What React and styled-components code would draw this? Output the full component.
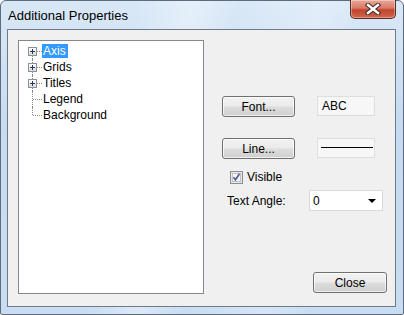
import React from 'react';
import styled, { createGlobalStyle } from 'styled-components';

const GlobalStyle = createGlobalStyle`
  html, body { margin: 0; padding: 0; background: #ffffff; }
  body { font-family: "Liberation Sans", Arial, sans-serif; }
`;

const treeItems = [
  { label: 'Axis', expandable: true, selected: true },
  { label: 'Grids', expandable: true },
  { label: 'Titles', expandable: true },
  { label: 'Legend' },
  { label: 'Background' },
];

const PlusBox = () => (
  <svg width="9" height="9" viewBox="0 0 9 9">
    <defs>
      <linearGradient id="pb" x1="0" y1="0" x2="0" y2="1">
        <stop offset="0" stopColor="#ffffff" />
        <stop offset="1" stopColor="#d8d8d8" />
      </linearGradient>
    </defs>
    <rect x="0.5" y="0.5" width="8" height="8" fill="url(#pb)" stroke="#8f8f8f" />
    <path d="M2 4.5h5M4.5 2v5" stroke="#1e3b78" strokeWidth="1" />
  </svg>
);

const CheckMark = () => (
  <svg width="13" height="13" viewBox="0 0 13 13">
    <rect x="0.5" y="0.5" width="12" height="12" fill="#e6e6e6" stroke="#8e8f8f" />
    <rect x="2.5" y="2.5" width="8" height="8" fill="#f4f4f4" stroke="#c4c4c4" />
    <path d="M3.5 6.2l2 2.6 4-6" fill="none" stroke="#4a5f97" strokeWidth="1.6" />
  </svg>
);

const CloseGlyph = () => (
  <svg width="16" height="12" viewBox="0 0 16 12">
    <path d="M3 2l10 8M13 2l-10 8" stroke="#3a2a28" strokeWidth="4.5" strokeLinecap="square" />
    <path d="M3 2l10 8M13 2l-10 8" stroke="#ffffff" strokeWidth="2.5" strokeLinecap="square" />
  </svg>
);

export default function App() {
  return (
    <>
      <GlobalStyle />
      <Window>
        <TitleBar>
          <Title>Additional Properties</Title>
          <CloseX><CloseGlyph /></CloseX>
        </TitleBar>
        <Client>
          <Tree>
            {treeItems.map((item, i) => (
              <TreeRow key={item.label}>
                <Connector $first={i === 0} $last={i === treeItems.length - 1}>
                  {item.expandable && <BoxSlot><PlusBox /></BoxSlot>}
                </Connector>
                <Label $selected={item.selected}>{item.label}</Label>
              </TreeRow>
            ))}
          </Tree>
          <Side>
            <Row $top={56}>
              <Button>Font...</Button>
              <Sample>ABC</Sample>
            </Row>
            <Row $top={21}>
              <Button>Line...</Button>
              <Sample><LineSample /></Sample>
            </Row>
            <Check>
              <CheckMark />
              <span>Visible</span>
            </Check>
            <AngleRow>
              <span>Text Angle:</span>
              <Select>
                <span>0</span>
                <Arrow />
              </Select>
            </AngleRow>
            <Footer>
              <Button $wide>Close</Button>
            </Footer>
          </Side>
        </Client>
      </Window>
    </>
  );
}

const Window = styled.div`
  width: 404px;
  height: 315px;
  box-sizing: border-box;
  display: flex;
  flex-direction: column;
  border: 1px solid #5d6b7c;
  border-radius: 6px 6px 2px 2px;
  background:
    linear-gradient(100deg, rgba(255,255,255,0) 30%, rgba(255,255,255,0.35) 42%, rgba(255,255,255,0) 52%, rgba(255,255,255,0.25) 70%, rgba(255,255,255,0) 80%),
    linear-gradient(180deg, #d9e8f7 0%, #c6dbf1 40%, #c9ddf2 100%);
  font-size: 11px;
  color: #000;
`;

const TitleBar = styled.div`
  height: 28px;
  display: flex;
  align-items: flex-start;
  justify-content: space-between;
  padding: 0 7px 0 7px;
  box-sizing: border-box;
`;

const Title = styled.div`
  font-family: "Liberation Sans", Arial, sans-serif;
  font-size: 13px;
  margin-top: 7px;
  color: #000;
`;

const CloseX = styled.div`
  width: 46px;
  height: 19px;
  margin-top: -1px;
  box-sizing: border-box;
  border: 1px solid #5a2b22;
  border-top: none;
  border-radius: 0 0 5px 5px;
  background: linear-gradient(180deg, #e9a898 0%, #d97a66 45%, #c2442c 55%, #cf6a4c 100%);
  box-shadow: inset 0 0 0 1px rgba(255,255,255,0.35);
  display: flex;
  align-items: center;
  justify-content: center;
`;

const Client = styled.div`
  margin: 0 7px 7px 6px;
  flex: 1;
  box-sizing: border-box;
  border: 1px solid #6f7a87;
  background: #f0f0f0;
  display: flex;
  padding: 10px 8px 12px 10px;
  gap: 18px;
`;

const Tree = styled.div`
  width: 186px;
  box-sizing: border-box;
  border: 1px solid #828790;
  background: #ffffff;
  padding: 2px 0 0 9px;
`;

const TreeRow = styled.div`
  display: flex;
  align-items: center;
  height: 16px;
`;

const Connector = styled.div`
  position: relative;
  width: 14px;
  height: 16px;
  flex: none;
  &::before {
    content: '';
    position: absolute;
    left: 4px;
    top: ${p => (p.$first ? '8px' : '0')};
    height: ${p => (p.$first || p.$last ? '8px' : '16px')};
    border-left: 1px dotted #8a8a8a;
  }
  &::after {
    content: '';
    position: absolute;
    left: 5px;
    top: 8px;
    width: 9px;
    border-top: 1px dotted #8a8a8a;
  }
`;

const BoxSlot = styled.span`
  position: absolute;
  left: 0;
  top: 4px;
  width: 9px;
  height: 9px;
  z-index: 1;
  display: flex;
  svg { display: block; }
`;

const Label = styled.span`
  font-size: 12px;
  line-height: 14px;
  padding: 0 2px 0 1px;
  background: ${p => (p.$selected ? '#3399ff' : 'transparent')};
  color: ${p => (p.$selected ? '#ffffff' : '#000000')};
`;

const Side = styled.div`
  flex: 1;
  display: flex;
  flex-direction: column;
  padding-bottom: 1px;
`;

const Row = styled.div`
  display: flex;
  align-items: center;
  gap: 22px;
  margin-top: ${p => p.$top}px;
`;

const Button = styled.div`
  width: ${p => (p.$wide ? '74px' : '73px')};
  height: 21px;
  box-sizing: border-box;
  border: 1px solid #707070;
  border-radius: 3px;
  background: linear-gradient(180deg, #f2f2f2 0%, #ebebeb 48%, #dddddd 52%, #cfcfcf 100%);
  box-shadow: inset 0 0 0 1px rgba(255,255,255,0.7);
  display: flex;
  align-items: center;
  justify-content: center;
  font-size: 12px;
  color: #000;
`;

const Sample = styled.div`
  width: 58px;
  height: 20px;
  box-sizing: border-box;
  border: 1px solid #dedede;
  background: #f7f7f7;
  display: flex;
  align-items: center;
  padding-left: 4px;
  font-size: 12px;
  margin-top: -2px;
`;

const LineSample = styled.div`
  width: 52px;
  height: 1px;
  background: #000;
  margin-left: -1px;
`;

const Check = styled.div`
  display: flex;
  align-items: center;
  gap: 4px;
  margin: 11px 0 0 8px;
  font-size: 12px;
  svg { display: block; }
`;

const AngleRow = styled.div`
  display: flex;
  align-items: center;
  justify-content: space-between;
  margin: 6px 4px 0 5px;
  font-size: 12px;
`;

const Select = styled.div`
  width: 74px;
  height: 21px;
  box-sizing: border-box;
  border: 1px solid #dadada;
  background: #ffffff;
  display: flex;
  align-items: center;
  justify-content: space-between;
  padding: 0 6px 0 3px;
`;

const Arrow = styled.span`
  width: 0;
  height: 0;
  border-left: 4px solid transparent;
  border-right: 4px solid transparent;
  border-top: 4px solid #000;
  margin-top: 1px;
`;

const Footer = styled.div`
  margin-top: auto;
  display: flex;
  justify-content: flex-end;
`;
